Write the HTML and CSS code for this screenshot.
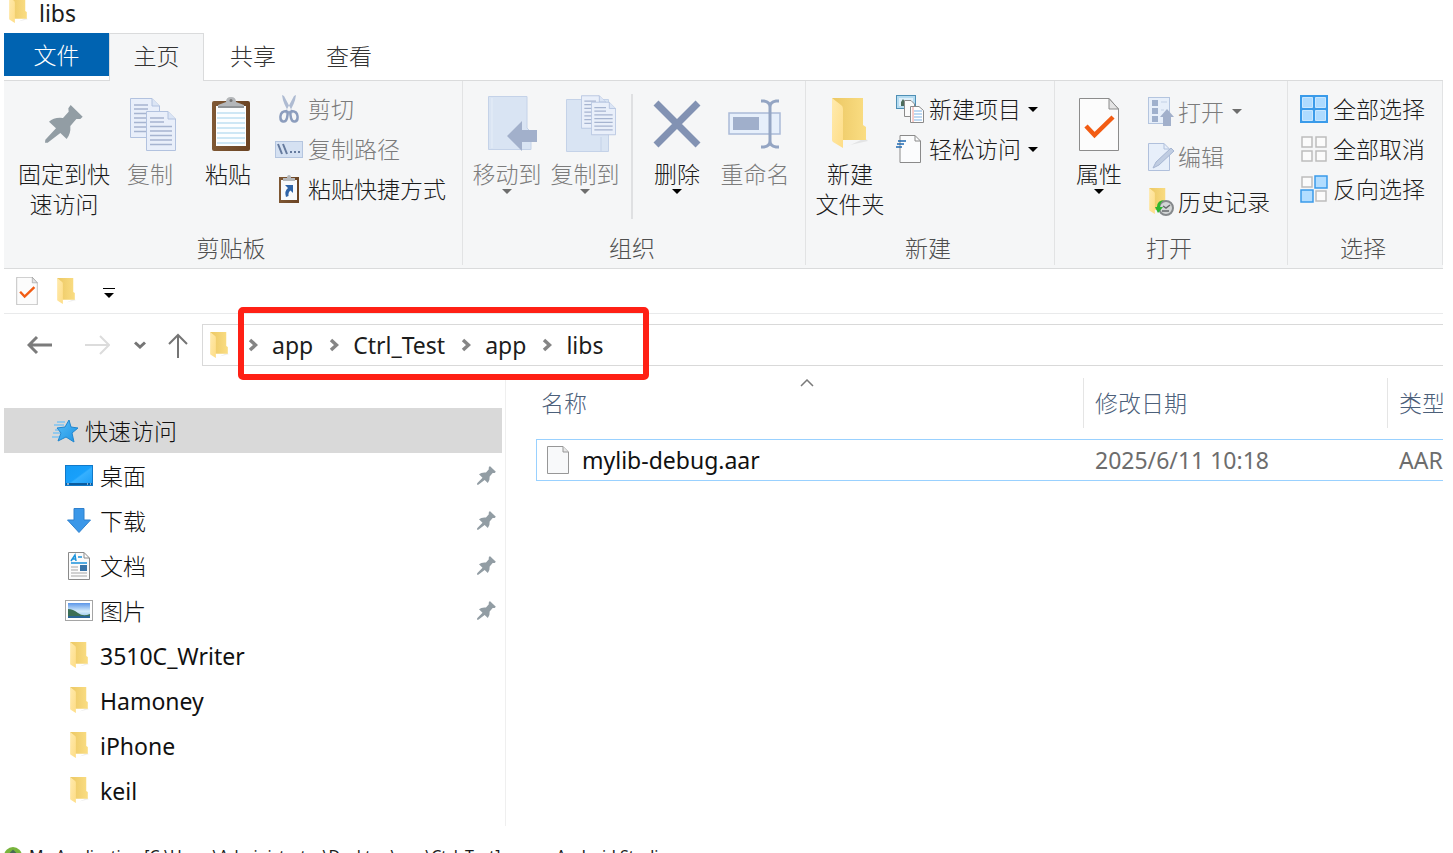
FILE: index.html
```html
<!DOCTYPE html>
<html lang="zh-CN">
<head>
<meta charset="utf-8">
<meta name="viewport" content="width=device-width, initial-scale=1">
<title>libs</title>
<link rel="stylesheet" href="styles.css">
</head>
<body>
<svg class="sprite" aria-hidden="true">
  <defs>
    <linearGradient id="g-back" x1="0" x2="1"><stop offset="0" stop-color="#ecc864"/><stop offset="1" stop-color="#fadd83"/></linearGradient>
    <linearGradient id="g-face" x1="0" x2="1" y2="1"><stop offset="0" stop-color="#ffeaae"/><stop offset="1" stop-color="#fedd86"/></linearGradient>
    <linearGradient id="g-wood" x1="0" x2="1"><stop offset="0" stop-color="#7f5834"/><stop offset="1" stop-color="#6b4424"/></linearGradient>
    <linearGradient id="g-desk" x2="1" y2="1"><stop offset="0" stop-color="#149bf5"/><stop offset=".5" stop-color="#18a0fb"/><stop offset=".55" stop-color="#35b0ff"/><stop offset="1" stop-color="#1a9cf6"/></linearGradient>
    <linearGradient id="g-sky" x2="0" y2="1"><stop offset="0" stop-color="#5b96e8"/><stop offset=".55" stop-color="#d6ecfb"/><stop offset="1" stop-color="#88bde6"/></linearGradient>
    <linearGradient id="g-star" x2="1" y2="1"><stop offset="0" stop-color="#56bdf7"/><stop offset="1" stop-color="#1e93e4"/></linearGradient>
  </defs>
  <symbol id="folder" viewBox="0 0 36 52">
    <path d="M12 50l6-3 18-4-3-3z" fill="#000" opacity=".07"/>
    <path d="M0 0H31V27L34 29V42H10Z" fill="url(#g-back)"/>
    <path d="M0 0L9 7Q11 8 11 11V50L1 44Q0 43 0 42Z" fill="url(#g-face)"/>
  </symbol>
  <symbol id="pin" viewBox="0 0 114 114">
    <path d="M77 0L113 35 106 42 94 42 76 63Q78 86 65 102L46 84 8 113 0 113 1 104 33 70 12 50Q27 36 54 39L71 20 70 10Z" fill="#929da4"/>
  </symbol>
  <symbol id="doc-check" viewBox="0 0 40 53">
    <path d="M.5.5H30L39.500 11V52.500H.5Z" fill="#fcfcfc" stroke="#8c8c8c"/>
    <path d="M30 .5V11H39.500Z" fill="#e4e4e4" stroke="#8c8c8c"/>
    <path d="M7 28L15.500 37 34 19" fill="none" stroke="#f25c13" stroke-width="4.500"/>
  </symbol>
  <symbol id="sheet" viewBox="0 0 30 40">
    <path d="M.5.5H22L29.500 8V39.500H.5Z" fill="#e9effa" stroke="#b2c2df"/>
    <path d="M22 .5V8H29.500" fill="#dbe5f5" stroke="#b2c2df"/>
    <path d="M4 7H18M4 11H18M4 15.500H26M4 20H26M4 24.500H26M4 29H26M4 33.500H26" stroke="#a6b4d0" fill="none" stroke-width="1.500"/>
  </symbol>
  <symbol id="crumb" viewBox="0 0 10 14"><path d="M2 2L7.500 7 2 12" fill="none" stroke="#858585" stroke-width="3.500"/></symbol>
  <symbol id="drop" viewBox="0 0 10 5"><path d="M0 0H10L5 5Z" fill="currentColor"/></symbol>
</svg>

<div class="window">
  <header class="title">
    <svg class="folder-sm"><use href="#folder"/></svg>
    <h1 class="title-text">libs</h1>
  </header>

  <nav class="tabs">
    <button class="tab tab-file">文件</button>
    <button class="tab tab-active">主页</button>
    <button class="tab">共享</button>
    <button class="tab">查看</button>
  </nav>

  <div class="ribbon">
    <section class="group">
      <div class="tools tools-clipboard">
        <button class="big big-wide"><span class="pic"><svg width="38" height="38"><use href="#pin"/></svg></span>固定到快<br>速访问</button>
        <button class="big off"><span class="pic pic-right"><svg width="46" height="54" viewBox="0 0 46 54"><use href="#sheet" x="0" y="1" width="30" height="40"/><use href="#sheet" x="16" y="14" width="30" height="40"/></svg></span>复制</button>
        <button class="big"><span class="pic pic-right"><svg width="38" height="54" viewBox="0 0 38 54">
          <rect x="0" y="4" width="38" height="50" rx="2" fill="url(#g-wood)"/><rect x="4" y="9" width="30" height="40" fill="#fcfeff"/>
          <path d="M5 16H33M5 21H33M5 26H33M5 31H33M5 36H33M5 41H33M5 46H33" stroke="#bfdff2" stroke-width="1.500"/>
          <path d="M6 11V8L14 5Q14 0 19 0T24 5L32 8V11Z" fill="#b4b7ba"/><path d="M6 10H32" stroke="#85888b" stroke-width="1.500"/><circle cx="19" cy="3.500" r="1.500" fill="#777"/></svg></span>粘贴</button>
        <div class="list">
          <button class="small off"><span class="mini"><svg width="20" height="28" viewBox="0 0 20 28"><path d="M3 0L5 1 14 18 11 19Q4 9 3 0M17 0L15 1 6 18 9 19Q16 9 17 0" fill="#aebbd2"/><path d="M8 16Q2 16 1.500 21T4 26.500 8 23 8.500 16M12 16Q18 16 18.500 21T16 26.500 12 23 11.500 16" fill="none" stroke="#8c9dbd" stroke-width="2.500"/></svg></span>剪切</button>
          <button class="small off"><span class="mini"><svg width="28" height="17" viewBox="0 0 28 17"><rect x=".5" y=".5" width="27" height="16" fill="#d5e1f2" stroke="#b4c5df"/><path d="M3 3L7 13M8 3L12 13" stroke="#667b9e" stroke-width="2"/><path d="M15 11H17M19 11H21M23 11H25" stroke="#667b9e" stroke-width="2"/></svg></span>复制路径</button>
          <button class="small"><span class="mini"><svg width="20" height="28" viewBox="0 0 20 28"><rect y="2" width="20" height="26" fill="url(#g-wood)"/><rect x="2" y="5" width="16" height="20" fill="#f8fafc"/><path d="M4 6V3H8Q8 0 10 0T12 3H16V6Z" fill="#b5b8bb"/><path d="M6 10H14V18L11.500 15.500Q9 17 9.500 21L7 22Q5 16 9 13Z" fill="#2f64a8"/></svg></span>粘贴快捷方式</button>
        </div>
      </div>
      <h2 class="caption">剪贴板</h2>
    </section>

    <section class="group">
      <div class="tools tools-organize">
        <button class="big off"><span class="pic pic-far"><svg width="50" height="56" viewBox="0 0 50 56"><path d="M.5.5H39V32L43 36V53.500H.5Z" fill="#d9e4f3" stroke="#c4d2e8"/><path d="M4 2V52" stroke="#e6eef8"/><path d="M19 40L34 25V34H49V46H34V55Z" fill="#a2b0cb"/></svg></span>移动到<svg class="drop"><use href="#drop"/></svg></button>
        <button class="big off"><span class="pic pic-far"><svg width="50" height="58" viewBox="0 0 50 58"><path d="M.5 4.500H42.500V56.500H.5Z" fill="#d9e4f3" stroke="#c4d2e8"/><path d="M35 42V56" stroke="#c4d2e8"/><use href="#sheet" x="15" y="0" width="25" height="34"/><use href="#sheet" x="25" y="6" width="25" height="35"/></svg></span>复制到<svg class="drop"><use href="#drop"/></svg></button>
        <span class="divider"></span>
        <button class="big"><span class="pic"><svg width="48" height="48" viewBox="0 0 48 48"><path d="M3 3L45 45M45 3L3 45" stroke="#8292b3" stroke-width="7"/></svg></span>删除<svg class="drop"><use href="#drop"/></svg></button>
        <button class="big off"><span class="pic"><svg width="54" height="50" viewBox="0 0 54 50"><rect x="1" y="14" width="51" height="21" fill="#e6effb" stroke="#aabbd8" stroke-width="1.500"/><rect x="5" y="18" width="26" height="13" fill="#a0afcb"/><path d="M33 2H36Q42 3 42 8Q42 3 48 2H51M42 8V42M33 48H36Q42 47 42 42Q42 47 48 48H51" fill="none" stroke="#94a5c3" stroke-width="3"/></svg></span>重命名</button>
      </div>
      <h2 class="caption">组织</h2>
    </section>

    <section class="group">
      <div class="tools tools-new">
        <button class="big"><span class="pic"><svg width="36" height="52"><use href="#folder"/></svg></span>新建<br>文件夹</button>
        <div class="list">
          <button class="small"><span class="mini"><svg width="28" height="28" viewBox="0 0 28 28"><rect x=".5" y=".5" width="19" height="13" fill="#b5dcf1" stroke="#4e8fb5"/><rect x="3" y="3" width="14" height="8" fill="#dff0fa"/><path d="M5 11V7L7 4 9 7V11Z" fill="#4b6b5b"/><path d="M8.500 5.500H15L18.500 9V21.500H8.500Z" fill="#fafafa" stroke="#8a8a8a"/><path d="M14.500 11.500H23L27.500 15.500V27.500H14.500Z" fill="#fff" stroke="#8a8a8a"/><path d="M18 16H26M18 19H26M18 22H26M18 25H26" stroke="#a9cdee" stroke-width="1.500"/><path d="M17 12V27" stroke="#ee9a94"/></svg></span>新建项目<svg class="drop"><use href="#drop"/></svg></button>
          <button class="small"><span class="mini"><svg width="28" height="28" viewBox="0 0 28 28"><path d="M4 .5H19L24.500 6V27.500H4Z" fill="#fbfcfd" stroke="#8a8a8a"/><path d="M19 .5V6H24.500" fill="none" stroke="#8a8a8a"/><path d="M2 6H10M1 9H8M0 12H6" stroke="#1f6ab3" stroke-width="1.500"/></svg></span>轻松访问<svg class="drop"><use href="#drop"/></svg></button>
        </div>
      </div>
      <h2 class="caption">新建</h2>
    </section>

    <section class="group">
      <div class="tools tools-open">
        <button class="big"><span class="pic"><svg width="40" height="53"><use href="#doc-check"/></svg></span>属性<svg class="drop"><use href="#drop"/></svg></button>
        <div class="list list-loose">
          <button class="small off"><span class="mini"><svg width="26" height="29" viewBox="0 0 26 29"><rect x=".5" y=".5" width="21" height="26" fill="#e7effa" stroke="#b4c5df"/><path d="M4 3H10V9H4ZM4 11H10V17H4ZM4 19H10V25H4Z" fill="#9fb0cd"/><path d="M13 5H19M13 13H16" stroke="#c3d1e6"/><path d="M19 12L26 20H23V29H15V20H12Z" fill="#a2b0cb"/></svg></span>打开<svg class="drop"><use href="#drop"/></svg></button>
          <button class="small off"><span class="mini"><svg width="26" height="28" viewBox="0 0 26 28"><path d="M.5.5H16L21.500 6V27.500H.5Z" fill="#e7effa" stroke="#b0c0dc"/><path d="M16 .5V6H21" fill="none" stroke="#b0c0dc"/><path d="M5 25L8 19 23 5 26 8 11 22Z" fill="#c0cde2" stroke="#a6b6d2"/></svg></span>编辑</button>
          <button class="small"><span class="mini"><svg width="26" height="28" viewBox="0 0 26 28"><use href="#folder" x="1" y="0" width="19" height="27"/><circle cx="18" cy="20" r="7" fill="#d2d5d6" stroke="#85898c" stroke-width="2"/><path d="M15 18L18 20 22 17M14 23H21" fill="none" stroke="#65696c" stroke-width="1.500"/><path d="M17 12Q12 13 12 19L15 19 10 25 7 19H9Q9 12 17 12" fill="#2cb52f"/></svg></span>历史记录</button>
        </div>
      </div>
      <h2 class="caption">打开</h2>
    </section>

    <section class="group">
      <div class="tools tools-select">
        <div class="list">
          <button class="small"><span class="mini"><svg width="28" height="28" viewBox="0 0 28 28"><rect width="28" height="28" fill="#3a9bea"/><path d="M2.500 2.500H12.500V12.500H2.500ZM15.500 2.500H25.500V12.500H15.500ZM2.500 15.500H12.500V25.500H2.500ZM15.500 15.500H25.500V25.500H15.500Z" fill="#aedbff" stroke="#c9e7ff"/></svg></span>全部选择</button>
          <button class="small"><span class="mini"><svg width="26" height="26" viewBox="0 0 26 26"><path d="M1 1H11V11H1ZM15 1H25V11H15ZM1 15H11V25H1ZM15 15H25V25H15Z" fill="#fbfbfb" stroke="#bdbdbd" stroke-width="1.500"/></svg></span>全部取消</button>
          <button class="small"><span class="mini"><svg width="28" height="28" viewBox="0 0 28 28"><path d="M2 2H12V12H2ZM16 16H26V26H16Z" fill="#fbfbfb" stroke="#bdbdbd" stroke-width="1.500"/><path d="M15 1H27V13H15ZM1 15H13V27H1Z" fill="#b2ddff" stroke="#3a9bea" stroke-width="1.500"/></svg></span>反向选择</button>
        </div>
      </div>
      <h2 class="caption">选择</h2>
    </section>
  </div>

  <div class="quick">
    <button class="plain" aria-label="属性"><svg width="22" height="28"><use href="#doc-check"/></svg></button>
    <button class="plain" aria-label="新建文件夹"><svg class="folder-sm"><use href="#folder"/></svg></button>
    <button class="plain quick-more" aria-label="自定义快速访问工具栏"><svg width="12" height="12" viewBox="0 0 12 12"><path d="M0 1.500H12" stroke="#000"/><path d="M1 6H11L6 11Z"/></svg></button>
  </div>

  <div class="navbar">
    <button class="plain nav-back" aria-label="返回"><svg width="25" height="20" viewBox="0 0 25 20"><path d="M10 2L2 10 10 18M2 10H25" fill="none" stroke="#7b7b7b" stroke-width="3"/></svg></button>
    <button class="plain nav-next" aria-label="前进"><svg width="25" height="20" viewBox="0 0 25 20"><path d="M15 1L24 10 15 19M24 10H0" fill="none" stroke="#dcdcdc" stroke-width="2"/></svg></button>
    <button class="plain nav-recent" aria-label="最近位置"><svg width="12" height="8" viewBox="0 0 12 8"><path d="M1 1.500L6 6 11 1.500" fill="none" stroke="#757575" stroke-width="3"/></svg></button>
    <button class="plain nav-up" aria-label="上移"><svg width="20" height="25" viewBox="0 0 20 25"><path d="M1 11L10 2 19 11M10 2V25" fill="none" stroke="#757575" stroke-width="2"/></svg></button>
    <div class="address">
      <svg class="folder-sm"><use href="#folder"/></svg>
      <svg class="crumb"><use href="#crumb"/></svg><a href="#app">app</a>
      <svg class="crumb"><use href="#crumb"/></svg><a href="#ctrl-test">Ctrl_Test</a>
      <svg class="crumb"><use href="#crumb"/></svg><a href="#ctrl-app">app</a>
      <svg class="crumb"><use href="#crumb"/></svg><a href="#libs">libs</a>
      <span class="highlight"></span>
    </div>
  </div>

  <main class="main">
    <nav class="side">
      <a class="place place-root" href="#quick"><svg width="28" height="24" viewBox="0 0 28 24"><path d="M17 1L19 8 26 9 20 14 22 23 14 18 6 22 9 14 5 9 13 8Z" fill="url(#g-star)" stroke="#2186cf"/><path d="M5 3H13M2 6H12M3 11H6M1 14H8M0 18H7" stroke="#7dc4f2" stroke-width="1.500"/></svg>快速访问</a>
      <a class="place" href="#desktop"><span class="mini"><svg width="28" height="21" viewBox="0 0 28 21"><rect x=".5" y=".5" width="27" height="20" fill="url(#g-desk)" stroke="#1179c9"/><path d="M1 19H27" stroke="#0a5c9f" stroke-width="2"/><path d="M2 19H4M22 19H23M25 19H26" stroke="#fff"/></svg></span>桌面<svg class="pin"><use href="#pin"/></svg></a>
      <a class="place" href="#downloads"><span class="mini"><svg width="24" height="25" viewBox="0 0 24 25"><path d="M7 .5H17V12H23.500L12 24.500 .5 12H7Z" fill="#3b97e8" stroke="#2f80cd"/></svg></span>下载<svg class="pin"><use href="#pin"/></svg></a>
      <a class="place" href="#documents"><span class="mini"><svg width="22" height="28" viewBox="0 0 22 28"><path d="M.5.5H16L21.500 6V27.500H.5Z" fill="#fbfbfb" stroke="#8a8a8a"/><path d="M16 .5V6H21" fill="none" stroke="#8a8a8a"/><path d="M3 9L7 3 8 9M5 7H8M10 5H14M3 11H19" fill="none" stroke="#1b93dc" stroke-width="1.500"/><path d="M3 15H10M3 18H10M3 21H19M3 24H19" stroke="#a5a5a5"/><rect x="12" y="13" width="7" height="6" fill="#3974a8"/></svg></span>文档<svg class="pin"><use href="#pin"/></svg></a>
      <a class="place" href="#pictures"><span class="mini"><svg width="28" height="21" viewBox="0 0 28 21"><rect x=".5" y=".5" width="27" height="20" fill="#fff" stroke="#a5a5a5"/><rect x="3" y="3" width="22" height="15" fill="url(#g-sky)"/><path d="M3 9Q8 9 13 13T25 14V16H3Z" fill="#3c6f56"/><path d="M3 16H25V18H3Z" fill="#2b6697"/></svg></span>图片<svg class="pin"><use href="#pin"/></svg></a>
      <a class="place latin" href="#writer"><span class="mini"><svg class="folder-sm"><use href="#folder"/></svg></span>3510C_Writer</a>
      <a class="place latin" href="#hamoney"><span class="mini"><svg class="folder-sm"><use href="#folder"/></svg></span>Hamoney</a>
      <a class="place latin" href="#iphone"><span class="mini"><svg class="folder-sm"><use href="#folder"/></svg></span>iPhone</a>
      <a class="place latin" href="#keil"><span class="mini"><svg class="folder-sm"><use href="#folder"/></svg></span>keil</a>
    </nav>

    <div class="files">
      <table class="table">
        <colgroup><col><col class="col-date"><col class="col-type"></colgroup>
        <thead>
          <tr><th class="head-name">名称<svg class="sort" viewBox="0 0 14 8"><path d="M1 7L7 1 13 7" fill="none" stroke="#7a7a7a" stroke-width="1.500"/></svg></th><th>修改日期</th><th>类型</th></tr>
        </thead>
        <tbody>
          <tr><td><span class="file"><svg width="22" height="28" viewBox="0 0 22 28"><path d="M.5.5H16L21.500 6V27.500H.5Z" fill="#f8f9fa" stroke="#979797"/><path d="M16 .5V6H21" fill="#e8e8e8" stroke="#979797"/></svg>mylib-debug.aar</span></td><td>2025/6/11 10:18</td><td>AAR</td></tr>
        </tbody>
      </table>
    </div>
  </main>

  <footer class="studio">
    <svg width="18" height="18" viewBox="0 0 18 18"><circle cx="9" cy="9" r="9" fill="#78b43c"/><path d="M6 10V7L9 4 12 7V10" fill="none" stroke="#476b55" stroke-width="2"/></svg>
    <span>My Application [C:\Users\Administrator\Desktop\app\Ctrl_Test] - app - Android Studio</span>
  </footer>
</div>
</body>
</html>
```
FILE: styles.css
```css
* { box-sizing: border-box; }

body {
  margin: 0;
  height: 100vh;
  overflow: hidden;
  background: #fff;
  color: #1c1c1c;
  font: 300 23px/30px "Noto Sans", "Noto Sans CJK SC", sans-serif;
}

button {
  margin: 0;
  padding: 0;
  border: 0;
  background: none;
  color: inherit;
  font: inherit;
}

a { color: inherit; text-decoration: none; }
h1, h2 { margin: 0; font: inherit; }
svg { display: block; flex: none; }

.sprite { position: absolute; width: 0; height: 0; }
.window { margin: 0 10px 0 4px; overflow: hidden; }
.folder-sm { width: 19px; height: 27px; }
.plain { display: flex; align-items: center; justify-content: center; }
.latin, .title-text, .address, td, .studio { font-weight: 400; }

/* Title bar and tabs */
.title {
  display: flex;
  gap: 11px;
  height: 33px;
  padding-left: 5px;
}
.title .folder-sm { margin-top: -3px; }
.title-text { line-height: 26px; }

.tabs {
  display: flex;
  height: 48px;
  border-bottom: 1px solid #dadbdc;
}
.tab {
  width: 96px;
  height: 47px;
  padding-bottom: 2px;
  color: #333;
}
.tab-file {
  width: 105px;
  height: 43px;
  padding-bottom: 0;
  background: #0063b1;
  color: #fff;
}
.tab-active {
  width: 95px;
  height: 48px;
  margin-right: 1px;
  padding-bottom: 4px;
  border: 1px solid #dadbdc;
  border-bottom: 0;
  background: #f5f6f7;
}

/* Ribbon */
.ribbon {
  display: grid;
  grid-template-columns: 459fr 343fr 249fr 233fr 155fr;
  height: 188px;
  padding-bottom: 3px;
  border-bottom: 1px solid #dadbdc;
  background: #f5f6f7;
}
.group {
  display: flex;
  flex-direction: column;
  justify-content: space-between;
  border-right: 1px solid #e2e3e4;
  white-space: nowrap;
}
.caption { padding: 0 4px 2px 0; text-align: center; color: #4f4f4f; }
.tools { display: flex; align-items: flex-start; }
.tools-clipboard { padding-left: 13px; }
.tools-organize { padding-left: 5px; }
.tools-new { padding-left: 5px; }
.tools-open { padding-left: 5px; }
.tools-select { padding-left: 12px; }

.big {
  display: flex;
  flex-direction: column;
  align-items: center;
  width: 78px;
  padding-top: 14px;
}
.big-wide { width: 94px; }
.pic {
  display: flex;
  align-items: center;
  justify-content: center;
  height: 58px;
  margin-bottom: 6px;
}
.pic-right { padding-left: 5px; }
.pic-far { padding-left: 11px; }
.off { color: #7c7c7c; }
.drop { width: 10px; height: 5px; color: #000; }
.off .drop { color: #6d6d6d; }

.list { padding: 8px 0 0 7px; }
.tools-clipboard .list { padding-left: 8px; }
.tools-open .list { padding-left: 9px; }
.tools-select .list { padding-left: 0; }
.small {
  display: flex;
  align-items: center;
  gap: 5px;
  height: 40px;
}
.small .drop { margin-left: 2px; }
.tools-open .small { gap: 3px; }
.tools-open .small .drop { margin-left: 5px; }
.list-loose .small { height: 45px; }
.mini { display: flex; justify-content: center; width: 28px; }
.divider { width: 2px; height: 125px; margin: 13px 5px 0 7px; background: #dfe0e2; }

/* Quick access toolbar */
.quick {
  display: flex;
  align-items: center;
  gap: 19px;
  height: 45px;
  padding-left: 12px;
  border-bottom: 1px solid #e9eaeb;
}
.quick-more { padding: 3px 0 0 8px; }

/* Navigation row */
.navbar {
  display: flex;
  align-items: center;
  height: 62px;
  padding-left: 23px;
}
.nav-back { width: 25px; }
.nav-next { width: 25px; margin-left: 33px; }
.nav-recent { width: 12px; margin-left: 24px; }
.nav-up { width: 20px; margin-left: 22px; }
.address {
  position: relative;
  display: flex;
  flex: 1;
  align-items: center;
  height: 42px;
  margin-left: 14px;
  padding-left: 7px;
  border: 1px solid #d9d9d9;
  border-right: 0;
  color: #1c1c1c;
}
.crumb { width: 10px; height: 14px; margin: 0 14px 0 16px; }
.address .folder-sm + .crumb { margin-left: 19px; }
.highlight {
  position: absolute;
  top: -18px;
  left: 35px;
  width: 411px;
  height: 73px;
  border: 6px solid #ff2015;
  border-radius: 5px;
}

/* Sidebar and file list */
.main { display: grid; grid-template-columns: 502px 1fr; }
.side {
  padding: 32px 3px 13px 0;
  border-right: 1px solid #efefef;
  color: #111;
}
.place {
  display: flex;
  align-items: center;
  gap: 7px;
  height: 45px;
  padding: 0 6px 0 61px;
}
.place-root { gap: 5px; padding-left: 48px; background: #d9d9d9; }
.pin { width: 19px; height: 19px; margin-left: auto; }

.files { padding: 2px 0 0 30px; overflow: hidden; }
.table {
  width: 100%;
  border-spacing: 0;
  table-layout: fixed;
}
.col-date { width: 304px; }
.col-type { width: 55px; }
th, td { padding: 0 0 0 11px; text-align: left; white-space: nowrap; overflow: hidden; }
th {
  position: relative;
  height: 50px;
  border-right: 1px solid #e5e5e5;
  color: #4c607a;
  font-weight: 300;
}
th:last-child { border-right: 0; }
.head-name { padding-left: 5px; }
.sort { position: absolute; top: 1px; left: calc(50% - 10px); width: 14px; height: 8px; }
tbody::before { content: ""; display: block; height: 11px; }
td {
  height: 42px;
  border: solid #99d1ff;
  border-width: 1px 0;
  color: #6d6d6d;
}
td:first-child { padding-left: 10px; border-left-width: 1px; color: #111; }
.file { display: flex; align-items: center; gap: 13px; }

/* Title of the window below */
.studio {
  display: flex;
  align-items: center;
  gap: 7px;
  padding-top: 15px;
  font-size: 16px;
  white-space: nowrap;
}
```
